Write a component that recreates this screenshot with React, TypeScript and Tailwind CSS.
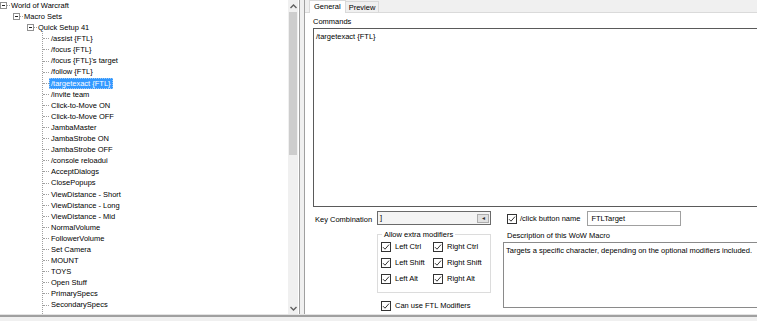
import React from "react"

const macros = [
    "/assist {FTL}",
    "/focus {FTL}",
    "/focus {FTL}'s target",
    "/follow {FTL}",
    "/targetexact {FTL}",
    "/invite team",
    "Click-to-Move ON",
    "Click-to-Move OFF",
    "JambaMaster",
    "JambaStrobe ON",
    "JambaStrobe OFF",
    "/console reloadui",
    "AcceptDialogs",
    "ClosePopups",
    "ViewDistance - Short",
    "ViewDistance - Long",
    "ViewDistance - Mid",
    "NormalVolume",
    "FollowerVolume",
    "Set Camera",
    "MOUNT",
    "TOYS",
    "Open Stuff",
    "PrimarySpecs",
    "SecondarySpecs",
    "WorldMarkers - Hold All",
]

const Minus = () => (
    <span className="flex h-[7px] w-[7px] shrink-0 items-center justify-center border border-[#919191] bg-white">
        <span className="h-px w-[3px] bg-[#222]" />
    </span>
)

const Check = () => (
    <span className="flex h-[10px] w-[10px] shrink-0 items-center justify-center border border-[#333] bg-white">
        <svg width="8" height="8" viewBox="0 0 8 8">
            <path d="M1 4.2 L3 6.2 L7 1.6" stroke="#333" strokeWidth="1" fill="none" />
        </svg>
    </span>
)

const Chevron = ({ down }: { down?: boolean }) => (
    <svg width="7" height="5" viewBox="0 0 7 5" className={down ? "rotate-180" : ""}>
        <path d="M0.5 4 L3.5 1 L6.5 4" stroke="#606060" strokeWidth="1.4" fill="none" />
    </svg>
)

const TreeRow = ({ label, pad }: { label: string; pad: string }) => (
    <div className={`flex h-[11.1px] items-center ${pad}`}>
        <Minus />
        <span className="w-[3px] border-t border-dotted border-[#a0a0a0]" />
        <span className="ml-px whitespace-nowrap">{label}</span>
    </div>
)

const ModCheck = ({ label }: { label: string }) => (
    <div className="flex h-[16px] items-center gap-[4px]">
        <Check />
        <span className="whitespace-nowrap">{label}</span>
    </div>
)

const App = () => {
    return (
        <div className="flex h-[321px] w-[757px] flex-col overflow-hidden bg-white text-[7.5px] text-black font-['Liberation_Sans',Arial,sans-serif]">
            <div className="flex h-[314px]">
                {/* Tree of macro sets */}
                <div className="w-[288px] overflow-hidden bg-white">
                    <TreeRow label="World of Warcraft" pad="pl-0" />
                    <TreeRow label="Macro Sets" pad="pl-[13px]" />
                    <TreeRow label="Quick Setup 41" pad="pl-[27px]" />
                    <div className="ml-[42px] border-l border-dotted border-[#a0a0a0]">
                        {macros.map((m) => (
                            <div key={m} className="flex h-[11.1px] items-center">
                                <span className="w-[6px] border-t border-dotted border-[#a0a0a0]" />
                                <span
                                    className={
                                        m === "/targetexact {FTL}"
                                            ? "whitespace-nowrap border border-dotted border-[#9cc8f5] bg-[#3399ff] px-px leading-[9px] text-white"
                                            : "whitespace-nowrap px-[2px]"
                                    }
                                >
                                    {m}
                                </span>
                            </div>
                        ))}
                    </div>
                </div>

                {/* Vertical scrollbar */}
                <div className="flex w-[10px] flex-col bg-[#f0f0f0]">
                    <div className="flex h-[12px] items-center justify-center">
                        <Chevron />
                    </div>
                    <div className="mx-px h-[143px] bg-[#cdcdcd]" />
                    <div className="flex-1" />
                    <div className="flex h-[12px] items-center justify-center">
                        <Chevron down />
                    </div>
                </div>

                {/* Splitter */}
                <div className="ml-px w-[6px] border-x border-[#a0a0a0] bg-[#f0f0f0]" />

                {/* Right panel */}
                <div className="flex flex-1 flex-col">
                    <div className="flex h-[13px] border-b border-[#dadada] bg-[#f0f0f0] pl-[4px]">
                        <div className="flex h-[13px] items-center bg-white px-[4px] border-x border-t border-[#d9d9d9]">General</div>
                        <div className="mt-[1px] flex h-[12px] items-center border-r border-t border-[#d9d9d9] px-[3px]">Preview</div>
                    </div>
                    <div className="flex flex-1 flex-col pl-[8px]">
                        <div className="mt-[2px] flex h-[13px] items-center">Commands</div>
                        <div className="h-[179px] border border-r-0 border-[#5a5a5a] px-[2px] pt-[2px]">/targetexact {"{FTL}"}</div>

                        <div className="flex flex-1">
                            <div className="w-[64px] pl-[2px] pt-[7px]">Key Combination</div>

                            <div className="flex w-[114px] flex-col">
                                <div className="mt-[4px] flex h-[14px] items-center justify-between border border-[#6a6a6a] bg-[#f4f4f4] pl-[2px] pr-[1px]">
                                    <span>]</span>
                                    <span className="flex h-[9px] w-[12px] items-center justify-center border border-[#adadad] bg-[#e1e1e1] text-[6px] leading-none text-[#333]">◂</span>
                                </div>
                                <fieldset className="mt-[5px] h-[63px] border border-[#dcdcdc] px-[3px]">
                                    <legend className="ml-px px-[2px] leading-[9px]">Allow extra modifiers</legend>
                                    <div className="grid grid-cols-[52px_1fr]">
                                        <ModCheck label="Left Ctrl" />
                                        <ModCheck label="Right Ctrl" />
                                        <ModCheck label="Left Shift" />
                                        <ModCheck label="Right Shift" />
                                        <ModCheck label="Left Alt" />
                                        <ModCheck label="Right Alt" />
                                    </div>
                                </fieldset>
                                <div className="mt-[5px] pl-[4px]">
                                    <ModCheck label="Can use FTL Modifiers" />
                                </div>
                            </div>

                            <div className="ml-[12px] flex flex-1 flex-col">
                                <div className="mt-[4px] flex h-[15px] items-center pl-[4px]">
                                    <Check />
                                    <span className="ml-[3px] whitespace-nowrap">/click button name</span>
                                    <div className="ml-[7px] flex h-[15px] w-[94px] items-center border border-[#a0a0a0] bg-white pl-[3px]">FTLTarget</div>
                                </div>
                                <div className="mt-[3px] flex h-[13px] items-center pl-[4px]">Description of this WoW Macro</div>
                                <div className="h-[66px] border border-r-0 border-[#8a8a8a] px-[2px] pt-[2px]">
                                    Targets a specific character, depending on the optional modifiers included.
                                </div>
                            </div>
                        </div>
                    </div>
                </div>
            </div>

            {/* Bottom edge */}
            <div className="flex-1 border-t border-[#e3e3e3] bg-[#f0f0f0]">
                <div className="h-[2px] bg-[#a0a0a0]" />
            </div>
        </div>
    )
}

export default App
